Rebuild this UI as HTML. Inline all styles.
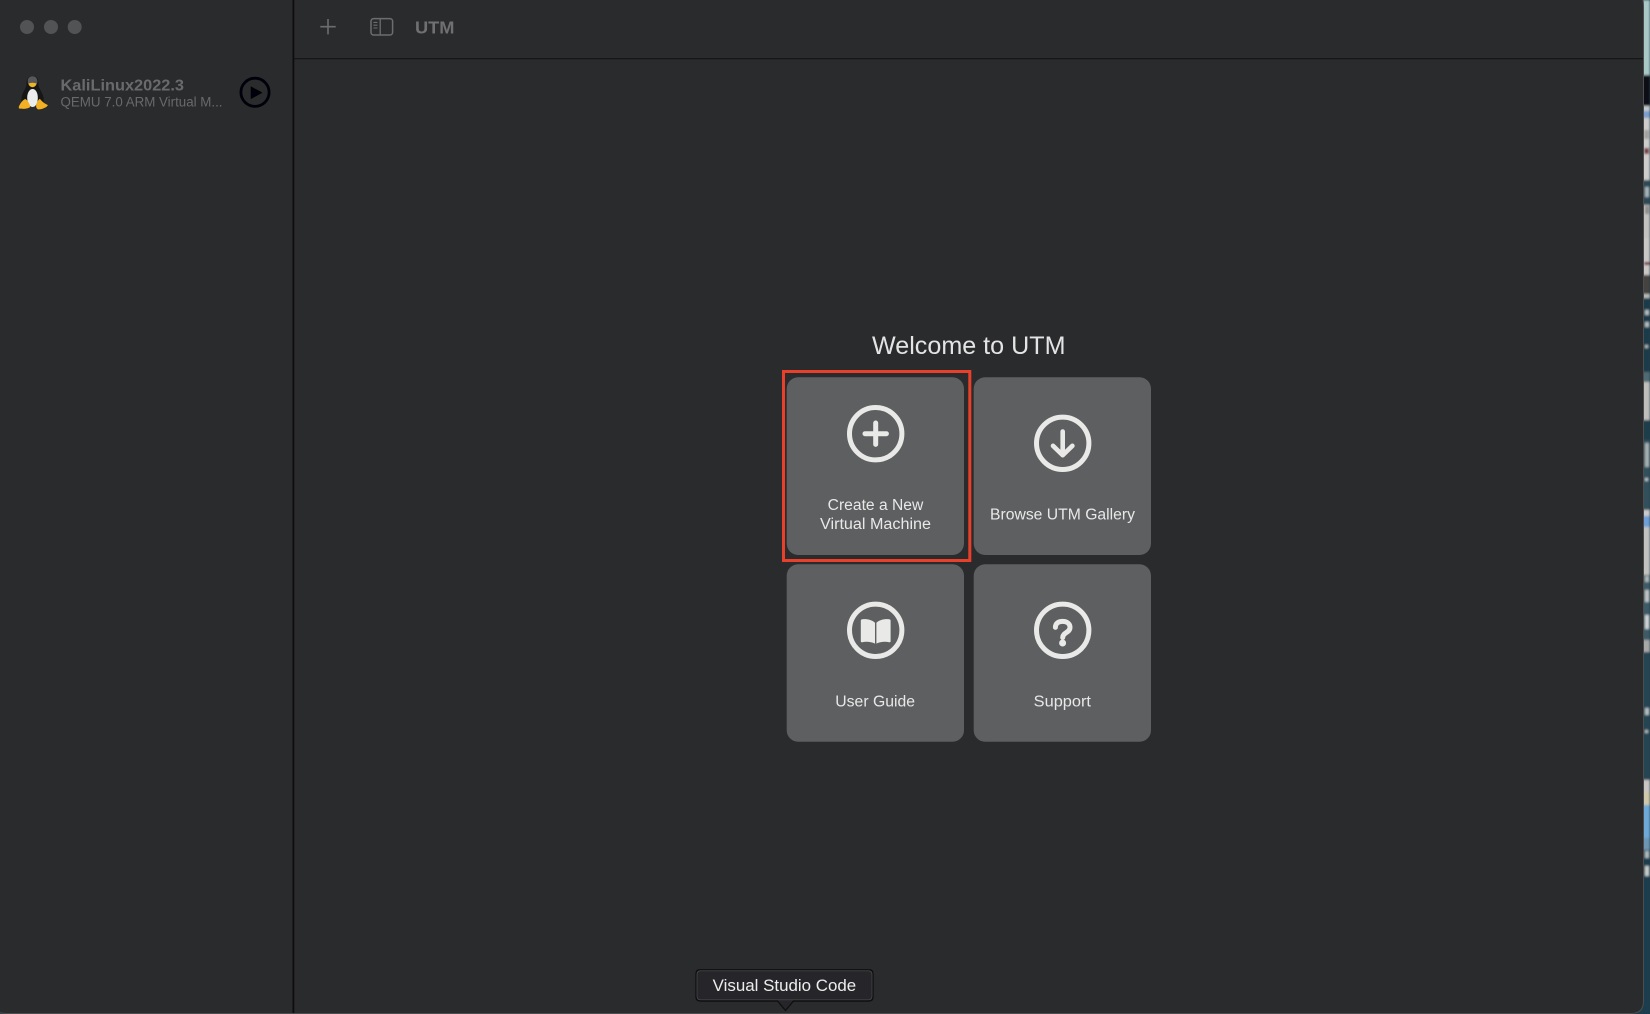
<!DOCTYPE html>
<html lang="en">
<head>
<meta charset="utf-8">
<title>UTM</title>
<style>
html,body{margin:0;padding:0;width:1650px;height:1014px;overflow:hidden;background:#1f3e4e}
svg{position:absolute;left:0;top:0;display:block}
text{font-family:"Liberation Sans",sans-serif}
</style>
</head>
<body>
<svg width="1650" height="1014" viewBox="0 0 1650 1014" xmlns="http://www.w3.org/2000/svg">
  <defs>
    <filter id="b" x="-5%" y="-1%" width="110%" height="102%"><feGaussianBlur stdDeviation="1"/></filter>
    <filter id="s" x="-2%" y="-2%" width="104%" height="104%"><feGaussianBlur stdDeviation="0.25"/></filter>
  </defs>

  <!-- background strip to the right of the window -->
  <g filter="url(#b)">
    <rect x="1630" y="0" width="20" height="75" fill="#a9c9c6"/>
    <rect x="1630" y="75" width="20" height="31" fill="#101112"/>
    <rect x="1630" y="106" width="20" height="5" fill="#c5c9cc"/>
    <rect x="1630" y="111" width="20" height="7" fill="#7d9fce"/>
    <rect x="1630" y="118" width="20" height="62" fill="#cfcdcb"/>
    <rect x="1644" y="130" width="5" height="9" fill="#a3a19f"/>
    <rect x="1644" y="148" width="5" height="6" fill="#7a3a40"/>
    <rect x="1630" y="180" width="20" height="25" fill="#2f4a55"/>
    <rect x="1645" y="187" width="4" height="10" fill="#a9b6ba"/>
    <rect x="1630" y="205" width="20" height="33" fill="#c4c2bf"/>
    <rect x="1645" y="206" width="4" height="8" fill="#8b8a88"/>
    <rect x="1630" y="238" width="20" height="37" fill="#cac8c5"/>
    <rect x="1644" y="262" width="6" height="3" fill="#7a2f3a"/>
    <rect x="1630" y="275" width="20" height="19" fill="#45433f"/>
    <rect x="1630" y="294" width="20" height="4" fill="#b9bbb9"/>
    <rect x="1630" y="298" width="20" height="84" fill="#1f3a48"/>
    <rect x="1645" y="310" width="4" height="5" fill="#b5c0c3"/>
    <rect x="1645" y="322" width="4" height="5" fill="#b5c0c3"/>
    <rect x="1645" y="345" width="3" height="3" fill="#b5c0c3"/>
    <rect x="1630" y="372" width="20" height="10" fill="#506a72"/>
    <rect x="1630" y="382" width="20" height="38" fill="#bfbebb"/>
    <rect x="1630" y="420" width="20" height="20" fill="#1e3c49"/>
    <rect x="1630" y="440" width="20" height="70" fill="#324f5b"/>
    <rect x="1645" y="443" width="4" height="24" fill="#a8b2b3"/>
    <rect x="1645" y="478" width="3" height="3" fill="#c3cbcd"/>
    <rect x="1630" y="510" width="20" height="6" fill="#cbcbcb"/>
    <rect x="1630" y="516" width="20" height="11" fill="#6f9fd6"/>
    <rect x="1630" y="527" width="20" height="48" fill="#c3c2c0"/>
    <rect x="1630" y="575" width="20" height="65" fill="#3e5a66"/>
    <rect x="1645" y="576" width="4" height="6" fill="#aeb8ba"/>
    <rect x="1645" y="590" width="4" height="12" fill="#c2c8c8"/>
    <rect x="1645" y="615" width="4" height="14" fill="#d2d6d6"/>
    <rect x="1630" y="640" width="20" height="12" fill="#a8a9a7"/>
    <rect x="1630" y="652" width="20" height="128" fill="#284553"/>
    <rect x="1645" y="708" width="4" height="7" fill="#b5c0c3"/>
    <rect x="1645" y="730" width="3" height="3" fill="#b5c0c3"/>
    <rect x="1630" y="780" width="20" height="12" fill="#c8c7c4"/>
    <rect x="1630" y="792" width="20" height="13" fill="#d0c9a8"/>
    <rect x="1630" y="805" width="20" height="33" fill="#6ea9d8"/>
    <rect x="1630" y="838" width="20" height="12" fill="#6c96b2"/>
    <rect x="1630" y="850" width="20" height="164" fill="#1f3e4e"/>
    <rect x="1645" y="851" width="4" height="7" fill="#b0bbbe"/>
    <rect x="1645" y="866" width="4" height="10" fill="#c8cfcf"/>
  </g>

  <!-- window -->
  <path d="M-10 -10H1631Q1643.5 -10 1643.5 6V1001Q1643.5 1013.5 1631 1013.5H12Q0 1013.5 -2 1012H-10Z" fill="#2a2b2d" stroke="#4c4d4f" stroke-width="1"/>

  <g filter="url(#s)">
    <!-- dividers -->
    <rect x="292.5" y="0" width="1.7" height="1013" fill="#0c0c0d"/>
    <rect x="294" y="58" width="1349" height="1.3" fill="#131314"/>

    <!-- traffic lights -->
    <circle cx="27" cy="27" r="7" fill="#515254"/>
    <circle cx="51" cy="27" r="7" fill="#515254"/>
    <circle cx="74.7" cy="27" r="7" fill="#515254"/>

    <!-- toolbar -->
    <path d="M320.3 26.7H335.7M328 19V34.4" stroke="#6c6d6f" stroke-width="1.6" fill="none"/>
    <rect x="371" y="18.6" width="21.6" height="16.4" rx="2.6" fill="none" stroke="#6c6d6f" stroke-width="1.5"/>
    <path d="M380.2 19V35" stroke="#6c6d6f" stroke-width="1.3"/>
    <path d="M373.4 22.4H377.4M373.4 25.2H377.4M373.4 28H377.4" stroke="#6c6d6f" stroke-width="1.1"/>
    <text x="415" y="33.3" font-size="17.5" font-weight="700" fill="#6f7072" textLength="39.5" lengthAdjust="spacingAndGlyphs">UTM</text>

    <!-- penguin -->
    <path d="M32.5 76C27.6 76 26.4 80 26.5 84C26.6 88 23.4 91 22.2 95C20.8 99 21.2 103 24 106L41 106C44.4 103 44.2 98.5 42.6 94.5C41 90.6 38.4 88 38.4 84C38.4 80 37.4 76 32.5 76Z" fill="#141415"/>
    <path d="M27.8 80C28.2 77.5 30.2 76.2 32.5 76.2C34.9 76.2 36.9 77.6 37.3 80.4C37.5 81.8 37.3 83 36.9 84H28.2C27.8 83 27.6 81.4 27.8 80Z" fill="#58595b"/>
    <path d="M32.6 89C35.6 89 37.6 92.6 37.8 97C38 102.5 36 107 32.6 107C29.2 107 27 102.5 27.2 97C27.4 92.6 29.6 89 32.6 89Z" fill="#ececec"/>
    <path d="M28.4 83.8C30 82.4 35 82.4 36.6 83.8C36 85.8 34.4 87.2 32.5 87.2C30.6 87.2 29 85.8 28.4 83.8Z" fill="#f0b424"/>
    <path d="M25.4 99C27.6 100.5 28.6 102 29.4 104C30.2 106 30.6 107 29 107.8C26 109.3 22 108.8 19 108.5C18.4 107 19 106 20 104.4C21 102.4 22.8 100 25.4 99Z" fill="#f3b021"/>
    <path d="M39.8 98.8C41.6 100.6 43 103 47.7 105C48.3 106 43.5 109.5 38 109.4C36 108.2 35.8 106 36.4 104C37 102 38.2 100 39.8 98.8Z" fill="#f3b021"/>

    <!-- sidebar item -->
    <text x="60.5" y="90.3" font-size="16" font-weight="700" fill="#6a6b6d" textLength="123.5" lengthAdjust="spacingAndGlyphs">KaliLinux2022.3</text>
    <text x="60.5" y="106.7" font-size="13.5" fill="#68696b" textLength="162" lengthAdjust="spacingAndGlyphs">QEMU 7.0 ARM Virtual M...</text>
    <circle cx="255" cy="92.3" r="14.1" fill="none" stroke="#060607" stroke-width="2.8"/>
    <path d="M251 86.8L261.8 92.7L251 98.6Z" fill="#060607" stroke="#060607" stroke-width="0.6" stroke-linejoin="round"/>

    <!-- welcome -->
    <text x="872" y="354" font-size="25" fill="#e4e4e4" textLength="193.5" lengthAdjust="spacingAndGlyphs">Welcome to UTM</text>

    <!-- cards -->
    <rect x="786.7" y="377.3" width="177.3" height="177.7" rx="11.5" fill="#5d5e60"/>
    <rect x="973.7" y="377.3" width="177.3" height="177.7" rx="11.5" fill="#5d5e60"/>
    <rect x="786.7" y="564.3" width="177.3" height="177.5" rx="11.5" fill="#5d5e60"/>
    <rect x="973.7" y="564.3" width="177.3" height="177.5" rx="11.5" fill="#5d5e60"/>

    <!-- red highlight -->
    <rect x="783.5" y="371.5" width="186.3" height="189" fill="none" stroke="#e8402a" stroke-width="3"/>

    <!-- icon: plus -->
    <circle cx="875.7" cy="433.7" r="26.2" fill="none" stroke="#e9e9e8" stroke-width="5"/>
    <path d="M865 433.7H886.4M875.7 423V444.4" stroke="#e9e9e8" stroke-width="5" stroke-linecap="round" fill="none"/>

    <!-- icon: download -->
    <circle cx="1062.7" cy="443.3" r="26.2" fill="none" stroke="#e9e9e8" stroke-width="5"/>
    <path d="M1062.7 431.5V454.6M1053 445.8L1062.7 455.2L1072.4 445.8" stroke="#e9e9e8" stroke-width="4.6" stroke-linecap="round" stroke-linejoin="round" fill="none"/>

    <!-- icon: book -->
    <circle cx="875.7" cy="630.3" r="26.2" fill="none" stroke="#e9e9e8" stroke-width="5"/>
    <path d="M875 622.8C872.4 620 866.5 618.6 861.8 619.4C861 619.6 860.8 620 860.8 620.8V641.2C860.8 642 861.4 642.3 862.2 642.2C866.5 641.4 871.4 641.8 875 643.6Z" fill="#e9e9e8"/>
    <path d="M876.4 622.8C879 620 884.9 618.6 889.6 619.4C890.4 619.6 890.6 620 890.6 620.8V641.2C890.6 642 890 642.3 889.2 642.2C884.9 641.4 880 641.8 876.4 643.6Z" fill="#e9e9e8"/>

    <!-- icon: question -->
    <circle cx="1062.7" cy="630.3" r="26.2" fill="none" stroke="#e9e9e8" stroke-width="5"/>
    <path d="M1055.4 627.4C1055.4 623.2 1058.4 621.4 1062.6 621.4C1067 621.4 1070 623.8 1070 627.4C1070 632.8 1062.7 632.4 1062.7 637.6" fill="none" stroke="#e9e9e8" stroke-width="5" stroke-linecap="round"/>
    <circle cx="1062.6" cy="643" r="3.5" fill="#e9e9e8"/>

    <!-- labels -->
    <text x="827.7" y="510" font-size="15.5" fill="#e8e8e8" textLength="95.6" lengthAdjust="spacingAndGlyphs">Create a New</text>
    <text x="820" y="529" font-size="15.5" fill="#e8e8e8" textLength="111" lengthAdjust="spacingAndGlyphs">Virtual Machine</text>
    <text x="990" y="519.3" font-size="15.5" fill="#e8e8e8" textLength="145" lengthAdjust="spacingAndGlyphs">Browse UTM Gallery</text>
    <text x="835.3" y="706.7" font-size="15.5" fill="#e8e8e8" textLength="79.7" lengthAdjust="spacingAndGlyphs">User Guide</text>
    <text x="1033.7" y="706.7" font-size="15.5" fill="#e8e8e8" textLength="57.3" lengthAdjust="spacingAndGlyphs">Support</text>

    <!-- tooltip -->
    <path d="M700 969.7H869Q873 969.7 873 973.7V997Q873 1001 869 1001H793.5L785.5 1010.5L777.5 1001H700Q696 1001 696 997V973.7Q696 969.7 700 969.7Z" fill="#25282a" stroke="#0d0d0e" stroke-width="1.2"/>
    <rect x="697" y="970.8" width="175" height="29" rx="3.5" fill="none" stroke="#4a4c4e" stroke-width="0.7"/>
    <text x="712.7" y="991" font-size="16.5" fill="#ececec" textLength="143.5" lengthAdjust="spacingAndGlyphs">Visual Studio Code</text>
  </g>
</svg>
</body>
</html>
